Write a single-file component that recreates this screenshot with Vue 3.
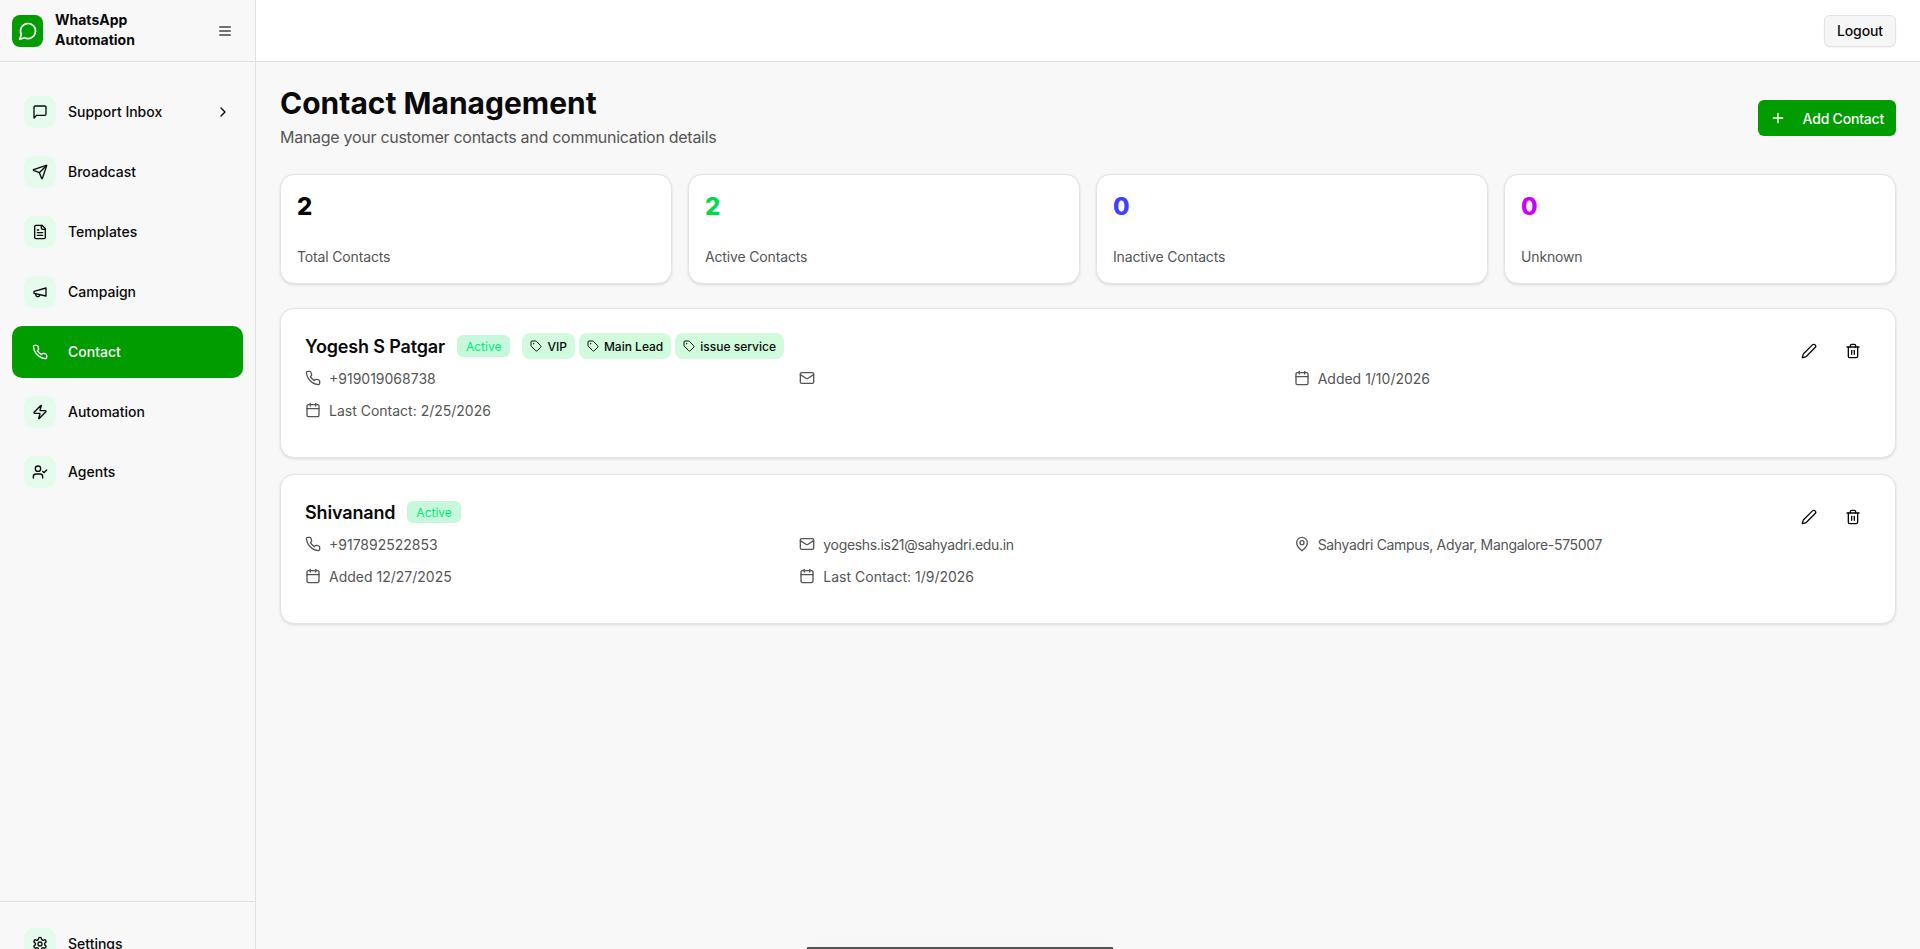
<script setup>
import { h } from 'vue'

// lucide outlines, everything written as plain path data
const icons = {
  message: ['M21 15a2 2 0 0 1-2 2H7l-4 4V5a2 2 0 0 1 2-2h14a2 2 0 0 1 2 2z'],
  send: ['M14.536 21.686a.5.5 0 0 0 .937-.024l6.5-19a.496.496 0 0 0-.635-.635l-19 6.5a.5.5 0 0 0-.024.937l7.93 3.18a2 2 0 0 1 1.112 1.11z', 'm21.854 2.147-10.94 10.939'],
  file: ['M15 2H6a2 2 0 0 0-2 2v16a2 2 0 0 0 2 2h12a2 2 0 0 0 2-2V7Z', 'M14 2v4a2 2 0 0 0 2 2h4', 'M10 9H8', 'M16 13H8', 'M16 17H8'],
  megaphone: ['m3 11 18-5v12L3 14v-3z', 'M11.6 16.8a3 3 0 1 1-5.8-1.6'],
  phone: ['M22 16.92v3a2 2 0 0 1-2.18 2 19.79 19.79 0 0 1-8.63-3.07 19.5 19.5 0 0 1-6-6 19.79 19.79 0 0 1-3.07-8.67A2 2 0 0 1 4.11 2h3a2 2 0 0 1 2 1.72 12.84 12.84 0 0 0 .7 2.81 2 2 0 0 1-.45 2.11L8.09 9.91a16 16 0 0 0 6 6l1.27-1.27a2 2 0 0 1 2.11-.45 12.84 12.84 0 0 0 2.81.7A2 2 0 0 1 22 16.92z'],
  zap: ['M4 14a1 1 0 0 1-.78-1.63l9.9-10.2a.5.5 0 0 1 .86.46l-1.92 6.02A1 1 0 0 0 13 10h7a1 1 0 0 1 .78 1.63l-9.9 10.2a.5.5 0 0 1-.86-.46l1.92-6.02A1 1 0 0 0 11 14z'],
  userCheck: ['M16 21v-2a4 4 0 0 0-4-4H6a4 4 0 0 0-4 4v2', 'M5 7a4 4 0 1 0 8 0a4 4 0 1 0-8 0', 'm16 11 2 2 4-4'],
  settings: ['M12.22 2h-.44a2 2 0 0 0-2 2v.18a2 2 0 0 1-1 1.73l-.43.25a2 2 0 0 1-2 0l-.15-.08a2 2 0 0 0-2.73.73l-.22.38a2 2 0 0 0 .73 2.73l.15.1a2 2 0 0 1 1 1.72v.51a2 2 0 0 1-1 1.74l-.15.09a2 2 0 0 0-.73 2.73l.22.38a2 2 0 0 0 2.73.73l.15-.08a2 2 0 0 1 2 0l.43.25a2 2 0 0 1 1 1.73V20a2 2 0 0 0 2 2h.44a2 2 0 0 0 2-2v-.18a2 2 0 0 1 1-1.73l.43-.25a2 2 0 0 1 2 0l.15.08a2 2 0 0 0 2.73-.73l.22-.39a2 2 0 0 0-.73-2.73l-.15-.08a2 2 0 0 1-1-1.74v-.5a2 2 0 0 1 1-1.74l.15-.09a2 2 0 0 0 .73-2.73l-.22-.38a2 2 0 0 0-2.73-.73l-.15.08a2 2 0 0 1-2 0l-.43-.25a2 2 0 0 1-1-1.73V4a2 2 0 0 0-2-2z', 'M9 12a3 3 0 1 0 6 0a3 3 0 1 0-6 0'],
  menu: ['M4 6h16', 'M4 12h16', 'M4 18h16'],
  chevron: ['m9 18 6-6-6-6'],
  plus: ['M5 12h14', 'M12 5v14'],
  tag: ['M12.586 2.586A2 2 0 0 0 11.172 2H4a2 2 0 0 0-2 2v7.172a2 2 0 0 0 .586 1.414l8.704 8.704a2.426 2.426 0 0 0 3.42 0l6.58-6.58a2.426 2.426 0 0 0 0-3.42z', 'M7 7.5a.5.5 0 1 0 1 0a.5.5 0 1 0-1 0'],
  mail: ['M4 4h16a2 2 0 0 1 2 2v12a2 2 0 0 1-2 2H4a2 2 0 0 1-2-2V6a2 2 0 0 1 2-2z', 'm22 7-8.97 5.7a1.94 1.94 0 0 1-2.06 0L2 7'],
  calendar: ['M8 2v4', 'M16 2v4', 'M5 4h14a2 2 0 0 1 2 2v14a2 2 0 0 1-2 2H5a2 2 0 0 1-2-2V6a2 2 0 0 1 2-2z', 'M3 10h18'],
  pin: ['M20 10c0 6-8 12-8 12s-8-6-8-12a8 8 0 0 1 16 0Z', 'M9 10a3 3 0 1 0 6 0a3 3 0 1 0-6 0'],
  pencil: ['M21.174 6.812a1 1 0 0 0-3.986-3.987L3.842 16.174a2 2 0 0 0-.5.83l-1.321 4.352a.5.5 0 0 0 .623.622l4.353-1.32a2 2 0 0 0 .83-.497z'],
  trash: ['M3 6h18', 'M19 6v14c0 1-1 2-2 2H7c-1 0-2-1-2-2V6', 'M8 6V4c0-1 1-2 2-2h4c1 0 2 1 2 2v2', 'M10 11v6', 'M14 11v6'],
  logo: ['M7.9 20A9 9 0 1 0 4 16.1L2 22Z']
}

const Icon = (props) =>
  h('svg', {
    width: props.size || 16,
    height: props.size || 16,
    viewBox: '0 0 24 24',
    fill: 'none',
    stroke: 'currentColor',
    'stroke-width': 2,
    'stroke-linecap': 'round',
    'stroke-linejoin': 'round'
  }, icons[props.name].map((d) => h('path', { d })))
Icon.props = ['name', 'size']

const navItems = [
  { label: 'Support Inbox', icon: 'message', more: true },
  { label: 'Broadcast', icon: 'send' },
  { label: 'Templates', icon: 'file' },
  { label: 'Campaign', icon: 'megaphone' },
  { label: 'Contact', icon: 'phone', active: true },
  { label: 'Automation', icon: 'zap' },
  { label: 'Agents', icon: 'userCheck' }
]

const stats = [
  { value: 2, label: 'Total Contacts', color: '#000000' },
  { value: 2, label: 'Active Contacts', color: '#00d94f' },
  { value: 0, label: 'Inactive Contacts', color: '#4040ff' },
  { value: 0, label: 'Unknown', color: '#cc00ff' }
]

const contacts = [
  {
    name: 'Yogesh S Patgar',
    tags: ['VIP', 'Main Lead', 'issue service'],
    details: [
      { icon: 'phone', text: '+919019068738' },
      { icon: 'mail', text: '' },
      { icon: 'calendar', text: 'Added 1/10/2026' },
      { icon: 'calendar', text: 'Last Contact: 2/25/2026' }
    ]
  },
  {
    name: 'Shivanand',
    tags: [],
    details: [
      { icon: 'phone', text: '+917892522853' },
      { icon: 'mail', text: 'yogeshs.is21@sahyadri.edu.in', tight: true },
      { icon: 'pin', text: 'Sahyadri Campus, Adyar, Mangalore-575007', tight: true },
      { icon: 'calendar', text: 'Added 12/27/2025' },
      { icon: 'calendar', text: 'Last Contact: 1/9/2026' }
    ]
  }
]
</script>

<template>
  <div class="layout">
    <aside class="sidebar">
      <div class="brand">
        <span class="brand-logo"><Icon name="logo" :size="20" /></span>
        <span class="brand-name">WhatsApp Automation</span>
        <Icon class="burger" name="menu" :size="16" />
      </div>

      <nav class="nav">
        <a v-for="item in navItems" :key="item.label" class="nav-item" :class="{ active: item.active }">
          <span class="nav-icon"><Icon :name="item.icon" :size="16" /></span>
          <span class="nav-label">{{ item.label }}</span>
          <Icon v-if="item.more" class="nav-more" name="chevron" :size="16" />
        </a>
      </nav>

      <div class="sidebar-foot">
        <a class="nav-item">
          <span class="nav-icon"><Icon name="settings" :size="16" /></span>
          <span class="nav-label">Settings</span>
        </a>
      </div>
    </aside>

    <div class="content">
      <header class="topbar">
        <button class="logout">Logout</button>
      </header>

      <main class="main">
        <div class="page-head">
          <div class="page-title">
            <h1>Contact Management</h1>
            <p>Manage your customer contacts and communication details</p>
          </div>
          <button class="add-btn">
            <Icon name="plus" :size="16" />
            <span>Add Contact</span>
          </button>
        </div>

        <section class="stats">
          <div v-for="s in stats" :key="s.label" class="stat">
            <div class="stat-value" :style="{ color: s.color }">{{ s.value }}</div>
            <div class="stat-label">{{ s.label }}</div>
          </div>
        </section>

        <section class="contact-list">
          <article v-for="c in contacts" :key="c.name" class="contact">
            <div class="contact-body">
              <div class="contact-head">
                <h3>{{ c.name }}</h3>
                <span class="status">Active</span>
                <div v-if="c.tags.length" class="tags">
                  <span v-for="t in c.tags" :key="t" class="tag">
                    <Icon name="tag" :size="12" />{{ t }}
                  </span>
                </div>
              </div>
              <div class="details">
                <div v-for="(d, i) in c.details" :key="i" class="detail">
                  <Icon :name="d.icon" :size="16" />
                  <span :class="{ tight: d.tight }">{{ d.text }}</span>
                </div>
              </div>
            </div>
            <div class="actions">
              <button class="icon-btn"><Icon name="pencil" :size="16" /></button>
              <button class="icon-btn"><Icon name="trash" :size="16" /></button>
            </div>
          </article>
        </section>
      </main>
    </div>

    <div class="toast-edge"></div>
  </div>
</template>

<style>
html, body { margin: 0; height: 100%; overflow: hidden; background: #f8f8f8; }
</style>

<style scoped>
.layout {
  display: flex;
  height: 949px;
  overflow: hidden;
  background: #f8f8f8;
  color: #0a0a0a;
  font-family: Inter, "Liberation Sans", sans-serif;
}

.sidebar {
  width: 255px;
  flex: none;
  display: flex;
  flex-direction: column;
  border-right: 1px solid #e0e0e0;
  background: #f8f8f8;
}
.brand {
  height: 61px;
  flex: none;
  display: flex;
  align-items: center;
  padding: 0 22px 0 12px;
  border-bottom: 1px solid #e0e0e0;
}
.brand-logo {
  width: 31px;
  height: 32px;
  flex: none;
  display: flex;
  align-items: center;
  justify-content: center;
  border-radius: 8px;
  background: #009c00;
  color: #fff;
}
.brand-name {
  width: 100px;
  margin-left: 12px;
  padding-bottom: 2px;
  font-size: 14px;
  font-weight: 700;
  line-height: 20px;
}
.burger { margin-left: auto; color: #444; }

.nav {
  flex: 1;
  display: flex;
  flex-direction: column;
  gap: 8px;
  padding: 24px 12px;
}
.nav-item {
  height: 52px;
  flex: none;
  display: flex;
  align-items: center;
  padding: 0 12px;
  border-radius: 10px;
  font-size: 14px;
  font-weight: 500;
  color: #0a0a0a;
}
.nav-item.active { background: #009c00; color: #fff; }
.nav-label { padding-bottom: 2px; }
.nav-icon {
  width: 32px;
  height: 32px;
  flex: none;
  display: flex;
  align-items: center;
  justify-content: center;
  margin-right: 12px;
  border-radius: 10px;
  background: #e5fbeb;
}
.active .nav-icon { background: transparent; }
.nav-more { margin-left: auto; }

.sidebar-foot {
  flex: none;
  height: 48px;
  box-sizing: border-box;
  padding: 16px 12px 0;
  border-top: 1px solid #e0e0e0;
}

.content {
  flex: 1;
  min-width: 0;
  display: flex;
  flex-direction: column;
}
.topbar {
  height: 61px;
  flex: none;
  display: flex;
  align-items: center;
  justify-content: flex-end;
  padding: 0 24px;
  background: #fff;
  border-bottom: 1px solid #e0e0e0;
}
.logout {
  height: 32px;
  padding: 0 12px;
  border: 1px solid #e4e4e4;
  border-radius: 6px;
  background: #f6f6f6;
  box-shadow: 0 1px 2px rgba(0,0,0,0.05);
  color: #0a0a0a;
  font: 500 14px Inter, sans-serif;
  letter-spacing: -0.1px;
}

.main { padding: 24px; }
.page-head {
  display: flex;
  justify-content: space-between;
  align-items: center;
  margin-bottom: 24px;
}
.page-title { margin: -1px 0 1px; }
h1 {
  margin: 0;
  font-size: 30px;
  font-weight: 700;
  line-height: 36px;
}
.page-head p {
  margin: 4px 0 0;
  font-size: 16px;
  line-height: 24px;
  letter-spacing: -0.28px;
  color: #555;
}
.add-btn {
  height: 36px;
  display: flex;
  align-items: center;
  gap: 17px;
  padding: 0 12px;
  border: 0;
  border-radius: 6px;
  background: #009c00;
  color: #fff;
  font: 500 14px Inter, sans-serif;
  letter-spacing: -0.2px;
}

.stats {
  display: grid;
  grid-template-columns: repeat(4, 1fr);
  gap: 16px;
  margin-bottom: 24px;
}
.stat, .contact {
  background: #fff;
  border: 1px solid #e3e3e3;
  border-radius: 14px;
  box-shadow: 0 1px 3px rgba(0,0,0,0.12);
}
.stat {
  height: 110px;
  box-sizing: border-box;
  padding: 16px;
  display: flex;
  flex-direction: column;
  justify-content: space-between;
}
.stat-value { font-size: 24px; font-weight: 800; line-height: 32px; }
.stat-label { font-size: 14px; line-height: 20px; letter-spacing: -0.15px; color: #555; }

.contact-list { display: flex; flex-direction: column; gap: 16px; }
.contact {
  display: flex;
  justify-content: space-between;
  height: 150px;
  box-sizing: border-box;
  padding: 24px 23px 24px 24px;
}
.contact-body { flex: 1; min-width: 0; padding-right: 18px; }
.contact-head {
  display: flex;
  align-items: center;
  height: 26px;
}
h3 { margin: 0; padding-top: 2px; font-size: 18px; font-weight: 600; line-height: 26px; letter-spacing: -0.16px; }
.status {
  margin-left: 12px;
  height: 22px;
  display: flex;
  align-items: center;
  padding: 0 9px;
  border-radius: 6px;
  background: #c8f8dc;
  color: #00ec78;
  font-size: 12px;
  font-weight: 400;
}
.tags { display: flex; gap: 4px; margin-left: 12px; }
.tag {
  height: 26px;
  display: flex;
  align-items: center;
  gap: 5px;
  padding: 0 8px;
  border-radius: 8px;
  background: #d1fbdc;
  font-size: 12px;
  font-weight: 500;
}
.details {
  display: grid;
  grid-template-columns: repeat(3, 1fr);
  gap: 12px 16px;
  margin-top: 9px;
}
.detail {
  height: 20px;
  display: flex;
  align-items: center;
  gap: 8px;
  font-size: 14px;
  color: #555;
}
.tight { letter-spacing: -0.33px; }
.actions { display: flex; gap: 6px; flex: none; }
.icon-btn {
  width: 38px;
  height: 36px;
  display: flex;
  align-items: center;
  justify-content: center;
  padding: 0;
  border: 0;
  background: transparent;
  color: #0a0a0a;
}

.toast-edge {
  position: fixed;
  left: 807px;
  bottom: 0;
  width: 306px;
  height: 2px;
  background: #555;
  box-shadow: 0 0 20px rgba(0,0,0,0.08);
}
</style>
